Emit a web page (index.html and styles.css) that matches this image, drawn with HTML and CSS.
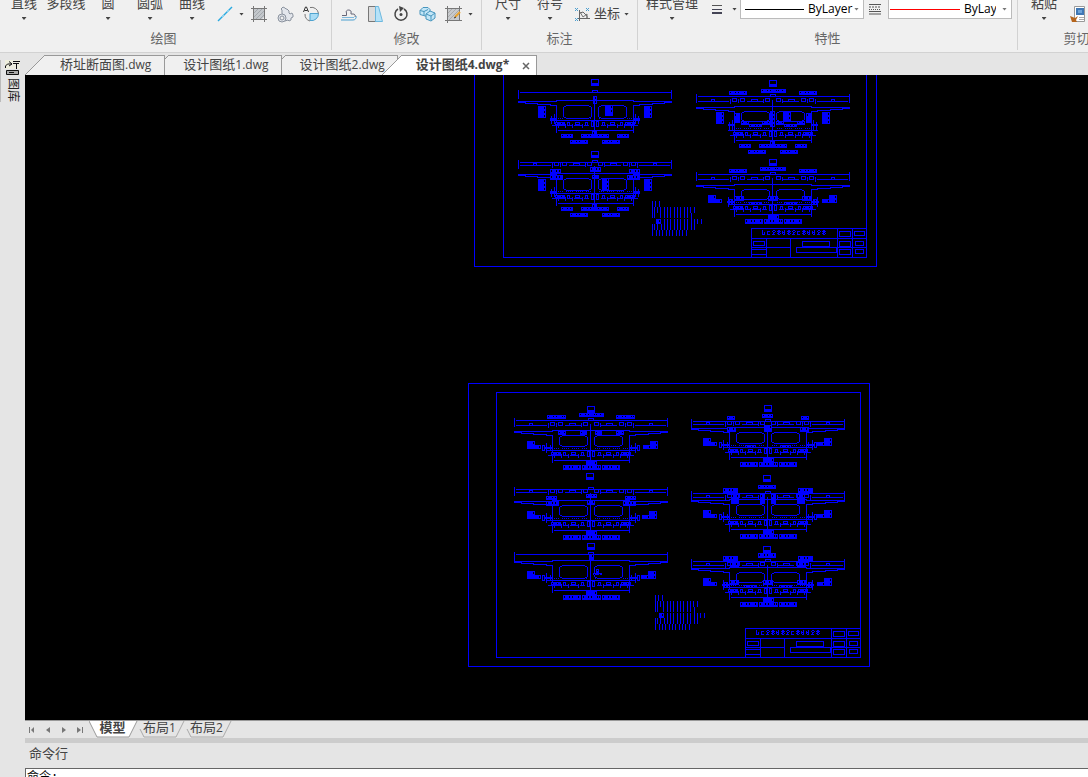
FILE: index.html
```html
<!DOCTYPE html>
<html lang="zh-CN">
<head>
    <meta charset="UTF-8">
    <meta name="viewport" content="width=device-width, initial-scale=1.0">
    <title>设计图纸4.dwg</title>
    <link rel="stylesheet" href="styles.css">
</head>
<body>
    <header class="ribbon">
        <section class="group group-draw">
            <div class="tools">
                <button class="big">直线<i class="arrow"></i></button>
                <button class="big">多段线<i class="arrow none"></i></button>
                <button class="big">圆<i class="arrow"></i></button>
                <button class="big">圆弧<i class="arrow"></i></button>
                <button class="big">曲线<i class="arrow"></i></button>
                <button class="small line-tool" aria-label="构造线">
                    <svg width="16" height="16"><path d="M1 15L15 1" stroke="#29a9e0" stroke-width="1.5"/><path d="M5 11l2-2M10 6l2-2" stroke="#8fd3f0" stroke-width="1.5"/></svg>
                </button>
                <button class="drop" aria-label="更多"><i class="arrow"></i></button>
                <button class="small" aria-label="填充">
                    <svg width="16" height="16"><path d="M3 3h10v8l-3 3H3z" fill="#c3c7cb"/><path d="M3 7l4-4M3 11l8-8M4 14l9-9M8 14l5-5" stroke="#a3a8ad" fill="none"/><path d="M0 2.500h16M0 13.500h16M2.500 0v16M13.500 0v16" stroke="#777" fill="none"/></svg>
                </button>
                <button class="small" aria-label="面域">
                    <svg width="17" height="17" fill="#e3e6ec" stroke="#8a929e"><path d="M5 7V4l-1-1 2-2 2 1 1 1h1l2 2v2l1 1 2-1 1 2v2l-2 1v2l-2 1-1-1-3 1z"/><circle cx="5" cy="12" r="4"/><circle cx="5" cy="12" r="2" fill="#f0f0f0"/></svg>
                </button>
                <button class="small" aria-label="文字">
                    <svg width="17" height="17" fill="none"><path d="M7 7.500h8.500a7 7 0 0 1-8.500 7z" fill="#a9dcf5" stroke="#4fa3cf"/><path d="M7 1.500a7 7 0 0 1 8.500 6M2 8a7 7 0 0 0 5 7" stroke="#777"/><path d="M.5 6l2-5h1l2 5M1.500 4.500h3" stroke="#333"/></svg>
                </button>
            </div>
            <h2>绘图</h2>
        </section>
        <section class="group group-modify">
            <div class="tools">
                <button class="small" aria-label="偏移">
                    <svg width="16" height="16" fill="none"><path d="M1 9.500h4.500V7c-2-4 6-4 4.500 0v1h2a2 2 0 0 1 2 3" stroke="#667"/><path d="M0 14h12a3 3 0 0 0 3-4" stroke="#4b9fd0"/><path d="M1 11.500h12" stroke="#7fb9dc"/></svg>
                </button>
                <button class="small" aria-label="倒角">
                    <svg width="16" height="18"><path d="M1.500 1.500h9v15h-9z" fill="#dcdcdc" stroke="#777"/><path d="M8.500 1.500h3l4 15h-7z" fill="#b5e2f8" stroke="#6db8de"/></svg>
                </button>
                <button class="small" aria-label="旋转">
                    <svg width="16" height="16" fill="none"><path d="M5 3a6 6 0 1 0 6 0" stroke="#444" stroke-width="1.500"/><path d="M6 0l5 2-4 4z" fill="#444"/><circle cx="8" cy="8.500" r="1.500" fill="#444"/></svg>
                </button>
                <button class="small" aria-label="三维">
                    <svg width="17" height="16" fill="#c3e6f7" stroke="#4795bd"><path d="M1 4.500l3-3h5l2 2v5l-3 2-7-2z"/><path d="M1 4.500l4 1v4M5 5.500l4-2"/><path d="M7 8l4-3 5 2v5l-4 3-5-2z"/><path d="M7 8l5 2v5M12 10l4-3"/></svg>
                </button>
                <button class="small" aria-label="编辑填充">
                    <svg width="17" height="17"><path d="M2.500 2.500h12v12h-12z" fill="#c7cacd" stroke="#777"/><path d="M3 7l4-4M3 11l8-8M4 14L14 4" stroke="#aaa"/><path d="M0 2.500h17M2.500 0v17M14.500 0v5M0 14.500h17" stroke="#777"/><path d="M10 11l5-5" stroke="#e9a22c" stroke-width="2"/><path d="M9 12l2-1" stroke="#333"/></svg>
                </button>
                <button class="drop" aria-label="更多"><i class="arrow"></i></button>
            </div>
            <h2>修改</h2>
        </section>
        <section class="group group-dim">
            <div class="tools">
                <button class="big">尺寸<i class="arrow"></i></button>
                <button class="big">符号<i class="arrow"></i></button>
                <button class="small wide">
                    <svg width="15" height="15" fill="none"><path d="M4.500 3v11M2 11.500h13M5 6l3-1 4 4v3" stroke="#666"/><path d="M0 1l3 3M3 1L0 4M11 1l3 3M14 1l-3 3M0 11l3 3M3 11l-3 3" stroke="#4b9fd0"/><path d="M5 5l3 5 4-3v4" stroke="#777"/></svg>
                    <span>坐标</span><i class="arrow"></i>
                </button>
            </div>
            <h2>标注</h2>
        </section>
        <section class="group group-prop">
            <div class="tools">
                <button class="big style">样式管理<i class="arrow"></i></button>
                <button class="small flat" aria-label="线宽">
                    <svg width="10" height="9"><path d="M0 .5h10" stroke="#555"/><path d="M0 4.500h10" stroke="#445"/><path d="M0 8h10" stroke="#445" stroke-width="2"/></svg>
                </button>
                <button class="drop flat" aria-label="更多"><i class="arrow"></i></button>
                <div class="combo">
                    <span class="line"></span>
                    <select aria-label="线宽"><option>ByLayer</option></select>
                    <i class="arrow"></i>
                </div>
                <span class="linetype">
                    <svg width="12" height="11"><path d="M0 .5h12M0 7.500h12M0 10h12" stroke="#555"/><path d="M0 3h12" stroke="#555" stroke-dasharray="2 1"/><path d="M0 5.500h12" stroke="#555" stroke-dasharray="1 1"/></svg>
                </span>
                <div class="combo long">
                    <span class="line red"></span>
                    <select aria-label="线型"><option>ByLayer</option></select>
                    <i class="arrow"></i>
                </div>
            </div>
            <h2>特性</h2>
        </section>
        <section class="group group-clip">
            <div class="tools">
                <button class="big">粘贴<i class="arrow"></i></button>
                <button class="small" aria-label="特性匹配">
                    <svg width="16" height="17"><path d="M4.500.5h10v15h-10z" fill="#fff" stroke="#999"/><path d="M6 2h8v7H6z" fill="#3f78b5"/><path d="M8 4h4v3H8z" fill="#6ea3d8"/><path d="M9 11.500h5M9 13.500h5" stroke="#aaa"/><path d="M0 10l5 2 3-2-2 4 1 2H2z" fill="#b5651d"/></svg>
                </button>
            </div>
            <h2>剪切板</h2>
        </section>
    </header>

    <div class="main">
        <aside class="side">
            <button class="palette">
                <svg width="15" height="16" fill="none" stroke="#111"><path d="M0 0h15v9H0z" fill="#eeeedd" stroke="none"/><path d="M.5 8V6l2-2h4M4 1.500l3 2.500-3 2M8 1.500h7M8 3.500h6M11.500 3v6"/><path d="M1.500 10.500h12v4h-12z" fill="#aaa"/><path d="M4 12.500h5"/></svg>
                <span>图库</span>
            </button>
        </aside>
        <div class="work">
            <nav class="doc-tabs">
                <a class="doc-tab first" href="#"><svg width="20" height="20"><path d="M0 20L20 0v20z" fill="#f0f0f0"/><path d="M0 20L20 0" stroke="#999"/></svg><span>桥址断面图<small>.dwg</small></span></a>
                <a class="doc-tab" href="#"><svg width="4" height="20"><path d="M0 4L4 0v20H0z" fill="#f0f0f0"/><path d="M0 4L4 0" stroke="#999"/></svg><span>设计图纸<small>1.dwg</small></span></a>
                <a class="doc-tab" href="#"><svg width="4" height="20"><path d="M0 4L4 0v20H0z" fill="#f0f0f0"/><path d="M0 4L4 0" stroke="#999"/></svg><span>设计图纸<small>2.dwg</small></span></a>
                <a class="doc-tab active" href="#"><svg width="20" height="20"><path d="M0 20L20 0v20z" fill="#fff"/><path d="M0 20L20 0" stroke="#999"/></svg><span>设计图纸<small>4.dwg*</small></span><svg class="close" width="8" height="8"><path d="M1 1l6 6M7 1L1 7" stroke="#666" stroke-width="1.500"/></svg></a>
            </nav>
            <svg class="canvas" id="canvas" shape-rendering="crispEdges"></svg>
            <nav class="layouts">
                <button class="nav" aria-label="第一个"><svg width="8" height="8"><path d="M1.500 1v6" stroke="#777"/><path d="M6 1v6L3 4z" fill="#777"/></svg></button>
                <button class="nav" aria-label="上一个"><svg width="8" height="8"><path d="M6 1v6L2 4z" fill="#777"/></svg></button>
                <button class="nav" aria-label="下一个"><svg width="8" height="8"><path d="M2 1v6l4-3z" fill="#777"/></svg></button>
                <button class="nav" aria-label="最后一个"><svg width="8" height="8"><path d="M6.500 1v6" stroke="#777"/><path d="M1 1v6l4-3z" fill="#777"/></svg></button>
                <a class="layout current" href="#"><svg width="49" height="17"><path d="M0 0l8 16h32l8-16" fill="#fff" stroke="#999"/></svg><span>模型</span></a>
                <a class="layout" href="#"><svg width="49" height="17"><path d="M4 8l4 8h32l8-16" fill="none" stroke="#aaa"/></svg><span>布局<small>1</small></span></a>
                <a class="layout" href="#"><svg width="49" height="17"><path d="M4 8l4 8h32l8-16" fill="none" stroke="#aaa"/></svg><span>布局<small>2</small></span></a>
            </nav>
            <footer class="command">
                <label for="cmd">命令行</label>
                <input type="text" id="cmd" value="命令:">
            </footer>
        </div>
    </div>
    <script src="drawing.js"></script>
</body>
</html>
```
FILE: styles.css
```css
* {
    margin: 0;
    padding: 0;
    box-sizing: border-box;
}
body {
    display: flex;
    flex-direction: column;
    height: 100vh;
    overflow: hidden;
    background-color: #e5e5e5;
    color: #444;
    font-family: 'Open Sans', 'Noto Sans CJK SC', sans-serif;
    font-size: 13px;
}
button {
    border: none;
    background: none;
    color: inherit;
    font: inherit;
    cursor: pointer;
}
a {
    color: inherit;
    text-decoration: none;
}
small {
    font-size: 12px;
}
svg {
    display: block;
    flex: none;
}
.ribbon {
    display: flex;
    align-items: flex-end;
    flex: none;
    height: 53px;
    padding-bottom: 2px;
    overflow: hidden;
    background-color: #f0f0f0;
    border-bottom: 1px solid #d2d2d2;
}
.group {
    flex: none;
    border-right: 1px solid #d2d2d2;
}
.group h2 {
    height: 22px;
    color: #666;
    font-size: 13px;
    font-weight: normal;
    line-height: 20px;
    text-align: center;
}
.group-draw {
    width: 332px;
}
.group-modify {
    width: 150px;
}
.group-dim {
    width: 156px;
}
.group-prop {
    width: 380px;
}
.group-clip {
    width: 131px;
}
.group-draw h2 {
    padding-right: 4px;
}
.tools {
    display: flex;
    align-items: flex-end;
    height: 60px;
    padding-left: 4px;
}
.group-draw .tools {
    padding-left: 3px;
}
.group-dim .tools, .group-clip .tools {
    padding-left: 5px;
}
.big {
    display: flex;
    flex-direction: column;
    align-items: center;
    width: 42px;
    padding-bottom: 5px;
    line-height: 18px;
    white-space: nowrap;
}
.big.style {
    width: 60px;
}
.big .arrow {
    margin: 5px 0 3px;
}
.arrow {
    flex: none;
    width: 5px;
    height: 3px;
    background-color: #444;
    clip-path: polygon(0 0, 100% 0, 50% 100%);
}
.arrow.none {
    visibility: hidden;
}
.small, .drop {
    display: flex;
    align-items: center;
    justify-content: center;
    width: 26px;
    height: 28px;
}
.line-tool {
    width: 24px;
}
.drop {
    width: 9px;
}
.small.wide {
    width: auto;
    gap: 4px;
    padding-left: 4px;
}
.wide span {
    padding-bottom: 3px;
}
.flat {
    height: 20px;
    margin-bottom: 9px;
}
.small.flat {
    margin-left: 2px;
}
.drop.flat {
    margin-right: 1px;
}
.combo {
    display: flex;
    align-items: center;
    width: 124px;
    height: 20px;
    margin-bottom: 9px;
    padding: 0 4px;
    background-color: #fff;
    border: 1px solid #bbb;
}
.combo .line {
    width: 59px;
    height: 1px;
    margin-right: 4px;
    background-color: #000;
}
.combo.long {
    padding-left: 1px;
}
.combo.long .line {
    width: 70px;
}
.combo .line.red {
    background-color: #f00;
}
.combo select {
    flex: 1;
    min-width: 0;
    padding-bottom: 1px;
    border: none;
    background: none;
    color: #000;
    font: inherit;
    font-size: 12px;
    appearance: none;
}
.combo.long select {
    margin-right: 6px;
}
.combo .arrow {
    background-color: #777;
}
.linetype {
    height: 20px;
    margin-bottom: 9px;
    padding: 5px 7px 0 5px;
}
.main {
    display: flex;
    flex: 1;
    min-height: 0;
}
.side {
    flex: none;
    width: 25px;
    padding-top: 7px;
}
.palette {
    display: flex;
    flex-direction: column;
    align-items: center;
    gap: 2px;
    width: 24px;
    border-left: 1px solid #bbb;
}
.palette span {
    color: #222;
    font-size: 12px;
    line-height: 14px;
    writing-mode: vertical-rl;
    text-orientation: sideways;
}
.work {
    display: flex;
    flex-direction: column;
    flex: 1;
    min-width: 0;
}
.doc-tabs {
    display: flex;
    align-items: flex-end;
    flex: none;
    height: 22px;
}
.doc-tab {
    display: flex;
    height: 20px;
}
.doc-tab span {
    padding: 0 12px 0 14px;
    background-color: #f0f0f0;
    border-top: 1px solid #999;
    border-right: 1px solid #999;
    line-height: 16px;
    white-space: nowrap;
}
.doc-tab.first span {
    padding: 0 13px 0 15px;
}
.doc-tab.active {
    position: relative;
    margin-left: -16px;
    border-right: 1px solid #999;
    font-weight: bold;
}
.doc-tab.active span {
    background-color: #fff;
    border-right: none;
}
.doc-tab .close {
    width: 15px;
    height: 20px;
    padding: 6px 6px 5px 1px;
    background-color: #fff;
    border-top: 1px solid #999;
}
.canvas {
    flex: 1;
    width: 100%;
    min-height: 0;
    background-color: #000;
}
.layouts {
    display: flex;
    flex: none;
    height: 18px;
    border-top: 1px solid #999;
}
.nav {
    display: flex;
    align-items: center;
    justify-content: center;
    width: 16px;
    padding-right: 3px;
}
.layout {
    position: relative;
    width: 47px;
    line-height: 12px;
    text-align: center;
}
.layout.current {
    font-weight: bold;
}
.layout svg {
    position: absolute;
    top: 0;
    left: 0;
}
.layout span {
    position: relative;
}
.command {
    display: flex;
    flex-direction: column;
    flex: none;
    height: 39px;
    overflow: hidden;
    border-top: 5px solid #ccc;
}
.command label {
    flex: none;
    height: 25px;
    padding-left: 4px;
    line-height: 20px;
}
.command input {
    flex: none;
    height: 20px;
    padding: 0 1px 5px;
    border: none;
    border-top: 1px solid #666;
    border-left: 1px solid #666;
    background-color: #fff;
    color: #000;
    font-family: 'Liberation Mono', 'Noto Sans CJK SC', monospace;
    font-size: 12px;
}
```
FILE: drawing.js
```js
// Model space: two sheets of bridge cross sections
const BLUE = '#00f';
const shapes = [];

function rect(x, y, w, h, color) {
    shapes.push(`<rect x="${x}" y="${y}" width="${w}" height="${h}" fill="${color || BLUE}"/>`);
}

function box(x, y, w, h) {
    rect(x, y, w, 1);
    rect(x, y + h - 1, w, 1);
    rect(x, y, 1, h);
    rect(x + w - 1, y, 1, h);
}

// dimension text, too small to read at this zoom
function label(x, y, w, h) {
    rect(x, y, w, h);
    const steps = [5, 3, 6, 2, 4];
    for (let i = 0, px = x + 1; px < x + w - 1; px += steps[i % 5], i++) {
        rect(px, y + 1, 1, h > 4 ? 2 : 1, '#000');
    }
}

// rotated text, almost solid
function block(x, y, w, h) {
    rect(x, y, w, h);
    for (let py = y + 1; py < y + h - 2; py += 4) {
        rect(x + w - 2, py, 1, 2, '#000');
    }
}

function mark(x, y) {
    box(x, y, 8, 6);
    rect(x, y + 4, 8, 3);
}

function section(s) {
    const cx = s.cx;
    const both = (fn, x, y, w, h) => {
        fn(cx + x, y, w, h);
        fn(cx + 2 - x - w, y, w, h);
    };
    const d = s.deck;
    const low = d + (s.drop || 0);

    // top dimension lines
    both(rect, -76, s.top - 2, 1, 9);
    rect(cx - 74, s.top, 151, 1);
    box(cx - 2, s.top - 2, 6, 3);
    if (s.second) {
        const y = s.second;
        both(rect, -74, y, 31, 1);
        both(rect, -25, y, 16, 1);
        both(box, -61, y - 2, 4, 3);
        both(rect, -42, y - 2, 1, 5);
        both(box, -40, y - 3, 5, 4);
        both(rect, -34, y - 2, 1, 4);
        both(box, -32, y - 3, 5, 4);
        both(box, -21, y - 2, 7, 3);
        both(rect, -9, y - 2, 1, 4);
        both(box, -7, y - 3, 5, 4);
    }

    // deck slab
    rect(cx - 38, d, 78, 1);
    both(rect, -76, d + 1, 39, 1);
    both(rect, -76, d + 2, 8, 1);
    both(rect, -69, d + 3, 13, 1);
    both(rect, -57, d + 4, 14, 1);
    both(rect, -44, d + 5, 7, 1);
    both(rect, -38, d + 5, 1, 28);

    // box girder cells
    const t = d + 5, b = s.cell;
    both(rect, -28, t, 23, 1);
    both(rect, -30, t + 1, 2, 1);
    both(rect, -5, t + 1, 2, 1);
    both(rect, -31, t + 2, 1, b - t - 3);
    both(rect, -3, t + 2, 1, b - t - 3);
    both(rect, -30, b - 1, 2, 1);
    both(rect, -5, b - 1, 2, 1);
    both(rect, -28, b, 23, 1);
    rect(cx, s.top + 4, 1, low + 30 - s.top);

    // bottom slab and chained dimensions
    rect(cx - 44, low + 20, 90, 1);
    both(rect, -42, low + 25, 13, 1);
    both(rect, -27, low + 25, 5, 1);
    both(rect, -20, low + 25, 8, 1);
    both(rect, -10, low + 25, 5, 1);
    both(label, -39, low + 22, 10, 3);
    both(box, -27, low + 22, 3, 4);
    both(box, -19, low + 22, 5, 3);
    both(box, -9, low + 22, 3, 4);
    both(box, -3, low + 21, 3, 6);
    [-36, -29, -22, -12].forEach(x => both(rect, x, low + 24, 1, 4));
    for (let x = -36; x < -2; x += 2) {
        if (x % 5) both(rect, x, low + 18, 1, 1);
    }
    rect(cx - 36, low + 30, 75, 1);
    both(rect, -38, low + 24, 1, 9);

    // captions
    if (s.twoRows) {
        both(label, -33, low + 34, 12, 4);
        label(cx - 13, low + 34, 28, 4);
        both(label, -24, low + 40, 18, 4);
        label(cx - 2, low + 31, 5, 7);
    } else {
        label(cx - 27, low + 35, 18, 5);
        label(cx - 8, low + 35, 19, 5);
        label(cx + 12, low + 35, 18, 5);
        block(cx - 4, low + 31, 11, 5);
    }

    // web notes on both sides
    if (s.wide) {
        both(block, -56, d + 6, 8, 12);
        both(rect, -43, d + 16, 1, 8);
        both(rect, -44, d + 18, 6, 2);
        both(rect, -40, d + 14, 1, 10);
    } else {
        const shift = s.shift || 0;
        const side = cx + (shift ? -63 : -64);
        block(side, d + 11, 8, 8);
        block(side + 6, d + 15, 8, 4);
        block(cx + 57 + shift, d + 11, 8, 8);
        block(cx + 50 + shift, d + 15, 8, 4);
        both(box, s.small ? -43 : -48, d + 15, 3, 6);
        both(rect, -44, d + 13, 1, 10);
        both(rect, -45, d + 17, 8, 2);
        both(rect, -40, d + 15, 1, 6);
    }

    mark(cx + (s.markX || -3), s.mark);
    (s.labels || []).forEach(l => label(...l));
    (s.blocks || []).forEach(l => block(...l));
    (s.pairs || []).forEach(p => both(label, ...p));
}

function sheet(x, y, w, h, ix, iy, iw, ih) {
    box(x, y, w, h);
    box(ix, iy, iw, ih);
}

function titleBlock(x, y) {
    box(x, y, 116, 30);
    rect(x, y + 10, 116, 1);
    rect(x, y + 19, 39, 1);
    rect(x + 86, y + 19, 30, 1);
    rect(x + 15, y + 10, 1, 20);
    rect(x + 39, y + 10, 1, 20);
    rect(x + 86, y, 1, 30);
    rect(x + 101, y, 1, 30);
    box(x + 2, y + 13, 12, 5);
    box(x, y + 21, 16, 6);
    box(x + 51, y + 13, 28, 6);
    box(x + 45, y + 19, 41, 6);
    box(x + 88, y + 3, 12, 6);
    box(x + 103, y + 3, 11, 5);
    box(x + 88, y + 13, 12, 6);
    box(x + 104, y + 13, 9, 5);
    box(x + 88, y + 21, 12, 6);
    box(x + 104, y + 21, 9, 5);

    const glyphs = ['10001000101010101110', '00001110100010001110', '01101111011011010110', '01101001011001001110', '00101010111010100110'];
    for (let i = 0; i < 13; i++) {
        const g = glyphs[[0, 1, 3, 2, 4, 2, 3, 1, 2, 4, 4, 3, 2][i]];
        for (let p = 0; p < 20; p++) {
            if (g[p] === '1') rect(x + 11 + i * 5 + p % 4, y + 2 + Math.floor(p / 4), 1, 1);
        }
    }
}

function notes(x, y) {
    [0, 3, 7].forEach(n => rect(x + n, y, 1, 6));
    [0, 2, 8, 12, 15, 18, 22, 25, 28, 32, 35].forEach(n => rect(x + n, y + 6, 1, 11));
    [5, 38, 42].forEach(n => rect(x + n, y + 6, 1, 6));
    [12, 15, 18, 22, 25, 28, 32, 35, 39, 42].forEach(n => rect(x + n, y + 18, 1, 11));
    [45, 49].forEach(n => rect(x + n, y + 18, 1, 5));
    block(x + 4, y + 18, 5, 5);
    rect(x + 39, y + 12, 1, 16);
    [0, 2, 5, 9].forEach(n => rect(x + n, y + 23, 1, 6));
    [0, 4, 7, 10, 14, 17, 20, 24, 27, 30, 34].forEach(n => rect(x + n, y + 29, 1, 6));
}

// upper sheet
sheet(474, 30, 403, 237, 503, 40, 364, 218);
section({ cx: 594, top: 92, deck: 100, cell: 118, mark: 79, wide: true, twoRows: true,
    blocks: [[605, 105, 8, 11], [593, 96, 4, 8]] });
section({ cx: 594, top: 162, second: 165, deck: 173, cell: 190, mark: 151, wide: true, twoRows: true,
    labels: [[590, 167, 11, 5], [592, 175, 7, 4]], blocks: [[602, 178, 7, 13]], pairs: [[-44, 169, 11, 5], [-44, 175, 13, 5]] });
section({ cx: 772, top: 96, second: 101, deck: 106, drop: 4, cell: 121, mark: 80, wide: true, twoRows: true,
    labels: [[761, 89, 25, 4]], blocks: [[783, 112, 8, 10], [770, 111, 5, 16]],
    pairs: [[-43, 91, 18, 4], [-38, 113, 6, 10], [-31, 121, 8, 4], [-23, 124, 13, 3], [-10, 121, 8, 4]] });
section({ cx: 772, top: 174, second: 179, deck: 184, cell: 199, mark: 159, small: true,
    labels: [[760, 167, 26, 4], [768, 196, 10, 5]], pairs: [[-43, 169, 18, 4], [-38, 196, 10, 5], [-23, 202, 13, 3]] });
titleBlock(751, 228);
notes(652, 201);

// lower sheet
sheet(468, 383, 402, 284, 496, 392, 365, 266);
section({ cx: 590, top: 420, second: 425, deck: 430, cell: 446, mark: 406, shift: 3,
    labels: [[579, 413, 25, 4]], pairs: [[-43, 415, 19, 4], [-32, 431, 8, 4], [-10, 431, 7, 4]] });
section({ cx: 590, top: 489, second: 492, deck: 500, cell: 516, mark: 473, markX: -4, shift: 2,
    labels: [[586, 494, 11, 4], [587, 500, 8, 5]], pairs: [[-44, 496, 11, 4], [-44, 501, 13, 5]] });
section({ cx: 590, top: 554, deck: 560, cell: 578, mark: 543, shift: 1,
    labels: [[593, 573, 9, 2], [596, 569, 3, 4]], blocks: [[589, 554, 5, 7]] });
section({ cx: 767, top: 421, second: 424, deck: 427, cell: 443, mark: 405,
    labels: [[762, 414, 11, 4]], blocks: [[764, 425, 8, 7]], pairs: [[-40, 416, 8, 4], [-40, 427, 9, 5], [-22, 445, 11, 2]] });
section({ cx: 767, top: 493, second: 497, deck: 499, cell: 515, mark: 475, markX: -4,
    labels: [[758, 485, 18, 4]], pairs: [[-44, 488, 15, 5], [-36, 494, 8, 10], [-7, 494, 5, 10]] });
section({ cx: 767, top: 561, second: 565, deck: 567, cell: 582, mark: 546, markX: -4, small: true,
    labels: [[758, 553, 18, 5], [763, 580, 10, 5]], pairs: [[-44, 556, 15, 5], [-37, 562, 9, 5], [-38, 580, 10, 5], [-23, 585, 13, 3]] });
titleBlock(745, 628);
notes(655, 595);

// the view origin sits at 25,75 in drawing units
document.getElementById('canvas').innerHTML = `<g transform="translate(-25 -75)">${shapes.join('')}</g>`;
```
